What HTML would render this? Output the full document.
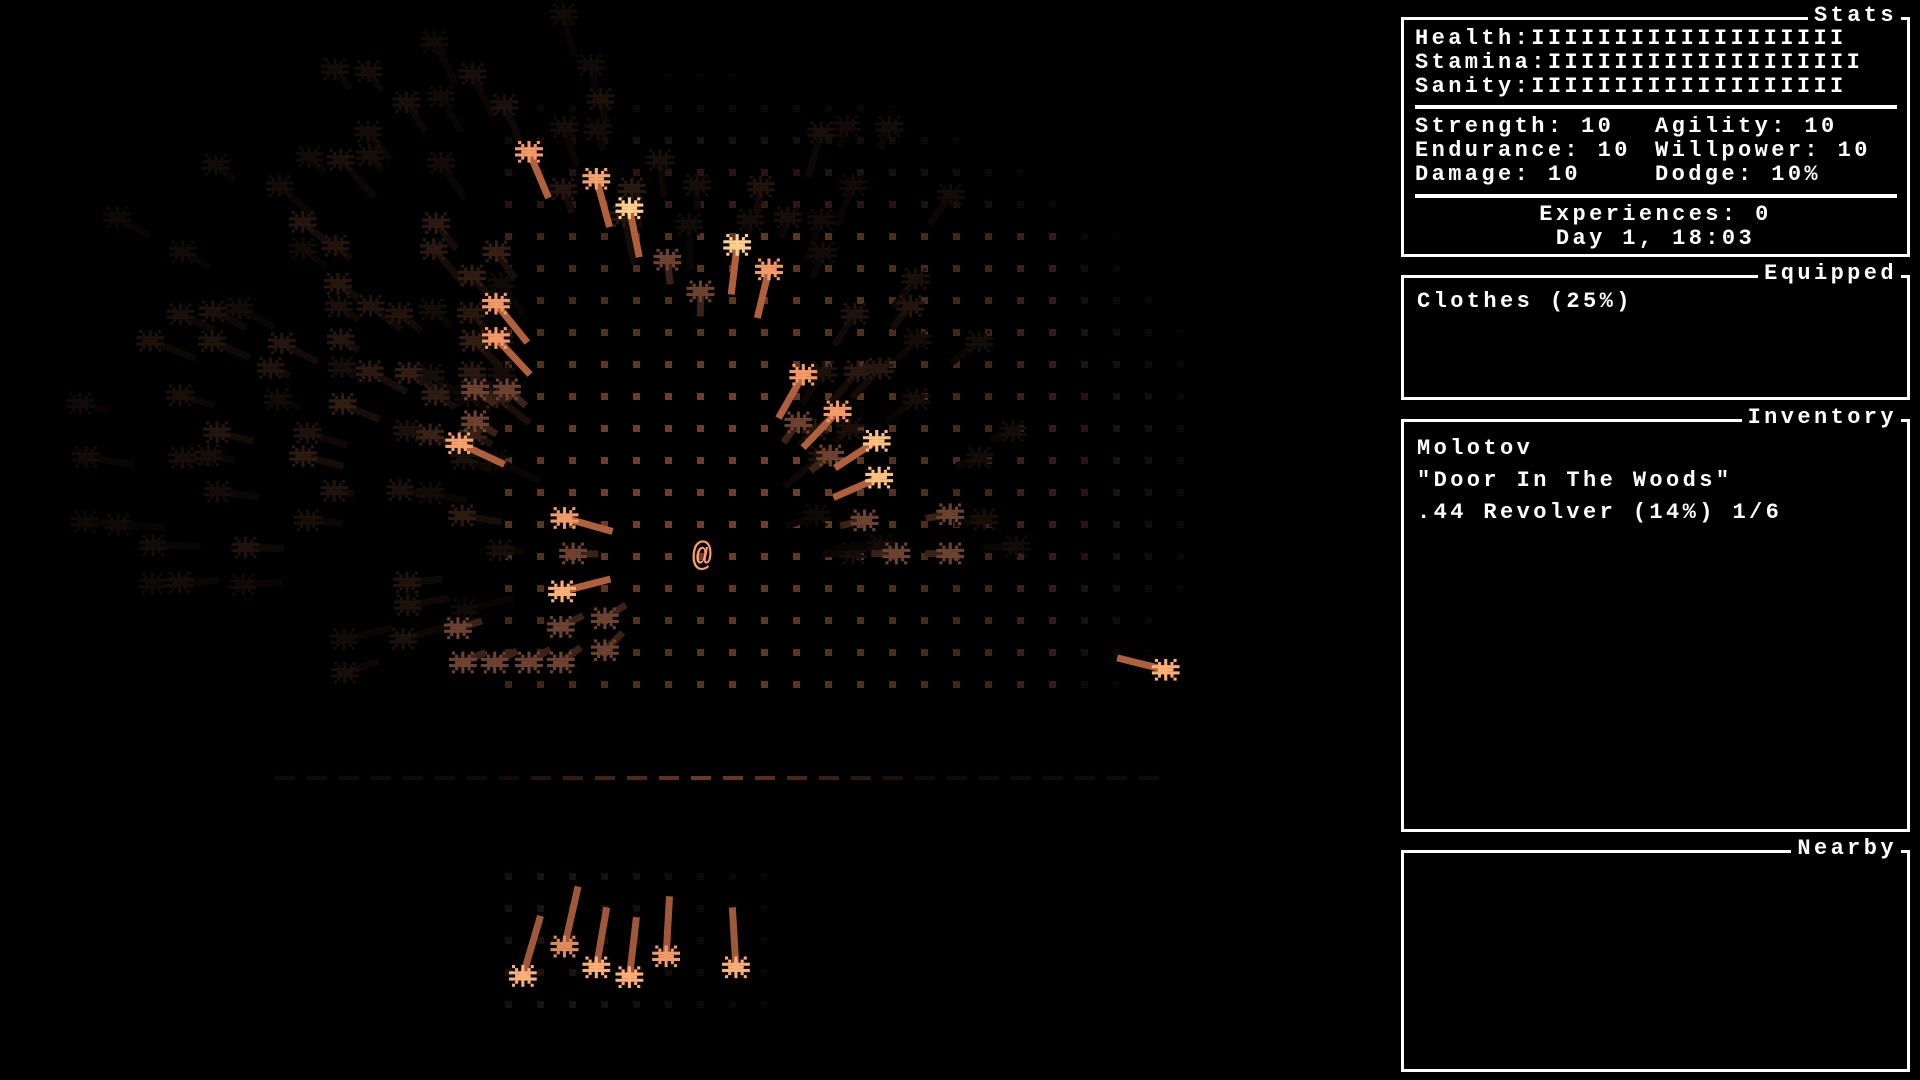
<!DOCTYPE html>
<html><head><meta charset="utf-8"><style>
html,body{margin:0;padding:0;background:#000;width:1920px;height:1080px;overflow:hidden}
#scene{position:absolute;left:0;top:0}
.box{position:absolute;left:1401px;border:3px solid #fff;box-sizing:border-box;width:509px}
.t{position:absolute;font-family:"Liberation Mono",monospace;font-weight:bold;font-size:22px;letter-spacing:3.4px;color:#fff;white-space:pre;line-height:24px}
.title{position:absolute;right:6px;top:-16px;background:#000;padding:0 4px 0 6px;font-family:"Liberation Mono",monospace;font-weight:bold;font-size:22px;letter-spacing:3.4px;color:#fff;line-height:24px}
.sep{position:absolute;left:1415px;width:482px;height:4px;background:#fff}
</style></head><body>
<svg id="scene" width="1920" height="1080" xmlns="http://www.w3.org/2000/svg">
<defs><symbol id="a" viewBox="0 0 9 7">
<rect x="1" y="0" width="1" height="1"/><rect x="7" y="0" width="1" height="1"/>
<rect x="2" y="1" width="1" height="1"/><rect x="6" y="1" width="1" height="1"/><rect x="4" y="0" width="1" height="7"/>
<rect x="0" y="2" width="9" height="1"/><rect x="2" y="3" width="5" height="1"/><rect x="0" y="4" width="9" height="1"/>
<rect x="2" y="5" width="1" height="1"/><rect x="6" y="5" width="1" height="1"/>
<rect x="1" y="6" width="1" height="1"/><rect x="7" y="6" width="1" height="1"/>
</symbol></defs>
<g id="g"></g>
</svg>
<div class="box" style="top:17px;height:240px"><span class="title">Stats</span></div>
<div class="t" style="left:1415px;top:27px">Health:IIIIIIIIIIIIIIIIIII
Stamina:IIIIIIIIIIIIIIIIIII
Sanity:IIIIIIIIIIIIIIIIIII</div>
<div class="sep" style="top:105px"></div>
<div class="t" style="left:1415px;top:115px">Strength: 10
Endurance: 10
Damage: 10</div>
<div class="t" style="left:1655px;top:115px">Agility: 10
Willpower: 10
Dodge: 10%</div>
<div class="sep" style="top:194px"></div>
<div class="t" style="left:1401px;width:509px;text-align:center;top:203px">Experiences: 0
Day 1, 18:03</div>
<div class="box" style="top:275px;height:125px"><span class="title">Equipped</span></div>
<div class="t" style="left:1417px;top:290px">Clothes (25%)</div>
<div class="box" style="top:419px;height:413px"><span class="title">Inventory</span></div>
<div class="t" style="left:1417px;top:433px;line-height:32px">Molotov
"Door In The Woods"
.44 Revolver (14%) 1/6</div>
<div class="box" style="top:850px;height:222px"><span class="title">Nearby</span></div>
<script>
(function(){
var g=document.getElementById('g'),h='';
var cx=700,cy=556;
function col(b,base){b=Math.max(0,Math.min(1,b));var c=base||[107,63,40];return 'rgb('+Math.round(c[0]*b)+','+Math.round(c[1]*b)+','+Math.round(c[2]*b)+')';}
for(var y=12;y<=1010;y+=32){for(var x=508;x<=1180;x+=32){
 var b=0;
 if(y<=690){var dx=(x-700)/430,dy=(y-470)/330;var d=Math.sqrt(dx*dx+dy*dy);b=1.25-d;if(y>=230&&y<=690&&x<=1080)b=Math.max(b,0.9-Math.abs(x-760)/700);}
 else if(y>=870&&x<=780&&x>=340){b=0.3-Math.abs(x-560)/900;}
 if(b>0.05) h+='<rect x="'+(x-3)+'" y="'+(y-3)+'" width="7" height="7" fill="'+col(b)+'"/>';
}}
for(var x=275;x<1163;x+=32){var b=Math.max(0.12,0.75-Math.abs(x-700)/330);h+='<rect x="'+x+'" y="776" width="20" height="4" fill="'+col(b,[150,80,45])+'"/>';}
function star(x,y,c,tl,tc){
 if(tl){var dx=cx-x,dy=cy-y,l=Math.sqrt(dx*dx+dy*dy);var ex=x+dx/l*tl,ey=y+dy/l*tl;
  h+='<line x1="'+x+'" y1="'+y+'" x2="'+ex.toFixed(1)+'" y2="'+ey.toFixed(1)+'" stroke="'+(tc||c)+'" stroke-width="7"/>';}
 h+='<use href="#a" x="'+(x-14)+'" y="'+(y-11)+'" width="28" height="22" fill="'+c+'"/>';
}
var s=7;function r(){s=(s*16807)%2147483647;return s/2147483647;}
for(var y=10;y<700;y+=30){for(var x=20;x<1040;x+=32){
 if(x>520&&x<790&&y>225&&y<700)continue;
 if(x>=790&&y>560)continue;
 var dx=(x-560)/560,dy=(y-380)/380,d=Math.sqrt(dx*dx+dy*dy);
 var p=0.85-d*0.8;if(r()<p){var bb=0.12+(1-d)*0.45*r();
  star(x+(r()-0.5)*12,y+(r()-0.5)*10,col(bb,[130,78,50]),20+r()*30,col(bb*0.5,[130,78,50]));}
}}
var S=1.2245;
var bright=[[432,124,'#f39a68'],[487,146,'#f6a26e'],[514,170,'#fcd08c'],[602,200,'#fcd08c'],[628,220,'#f49a68'],[405,248,'#f39a68'],[405,276,'#f39a68'],[656,306,'#f49a68'],[684,336,'#f49a68'],[716,360,'#fcc080'],[718,390,'#fcc080'],[375,362,'#f6a26e'],[461,423,'#f49a68'],[459,483,'#fcb078'],[952,547,'#fcb078'],[427,797,'#fcb078'],[461,773,'#e08a5c'],[487,790,'#fcb078'],[514,798,'#fcb078'],[544,781,'#f49a68'],[601,790,'#fcb078']];
var med=[[545,212],[572,238],[388,318],[414,318],[388,344],[652,345],[678,372],[706,425],[732,452],[468,452],[494,505],[494,531],[458,512],[432,541],[458,541],[404,541],[378,541],[374,513],[776,452],[776,420]];
for(var i=0;i<med.length;i++)star(med[i][0]*S,med[i][1]*S,'#6e4230',25,'#3a2216');
for(var i=0;i<bright.length;i++){var x=bright[i][0]*S,y=bright[i][1]*S;
 if(y>900){h+='<line x1="'+x+'" y1="'+y+'" x2="'+(x+(700-x)*0.1)+'" y2="'+(y-60)+'" stroke="#a0583a" stroke-width="7"/>';star(x,y,bright[i][2]);}
 else star(x,y,bright[i][2],50,'#b0603c');}
h+='<text x="702" y="565" text-anchor="middle" font-family="Liberation Mono,monospace" font-weight="bold" font-size="34" fill="#ff9e6c">@</text>';
g.innerHTML=h;
})();
</script>
</body></html>
